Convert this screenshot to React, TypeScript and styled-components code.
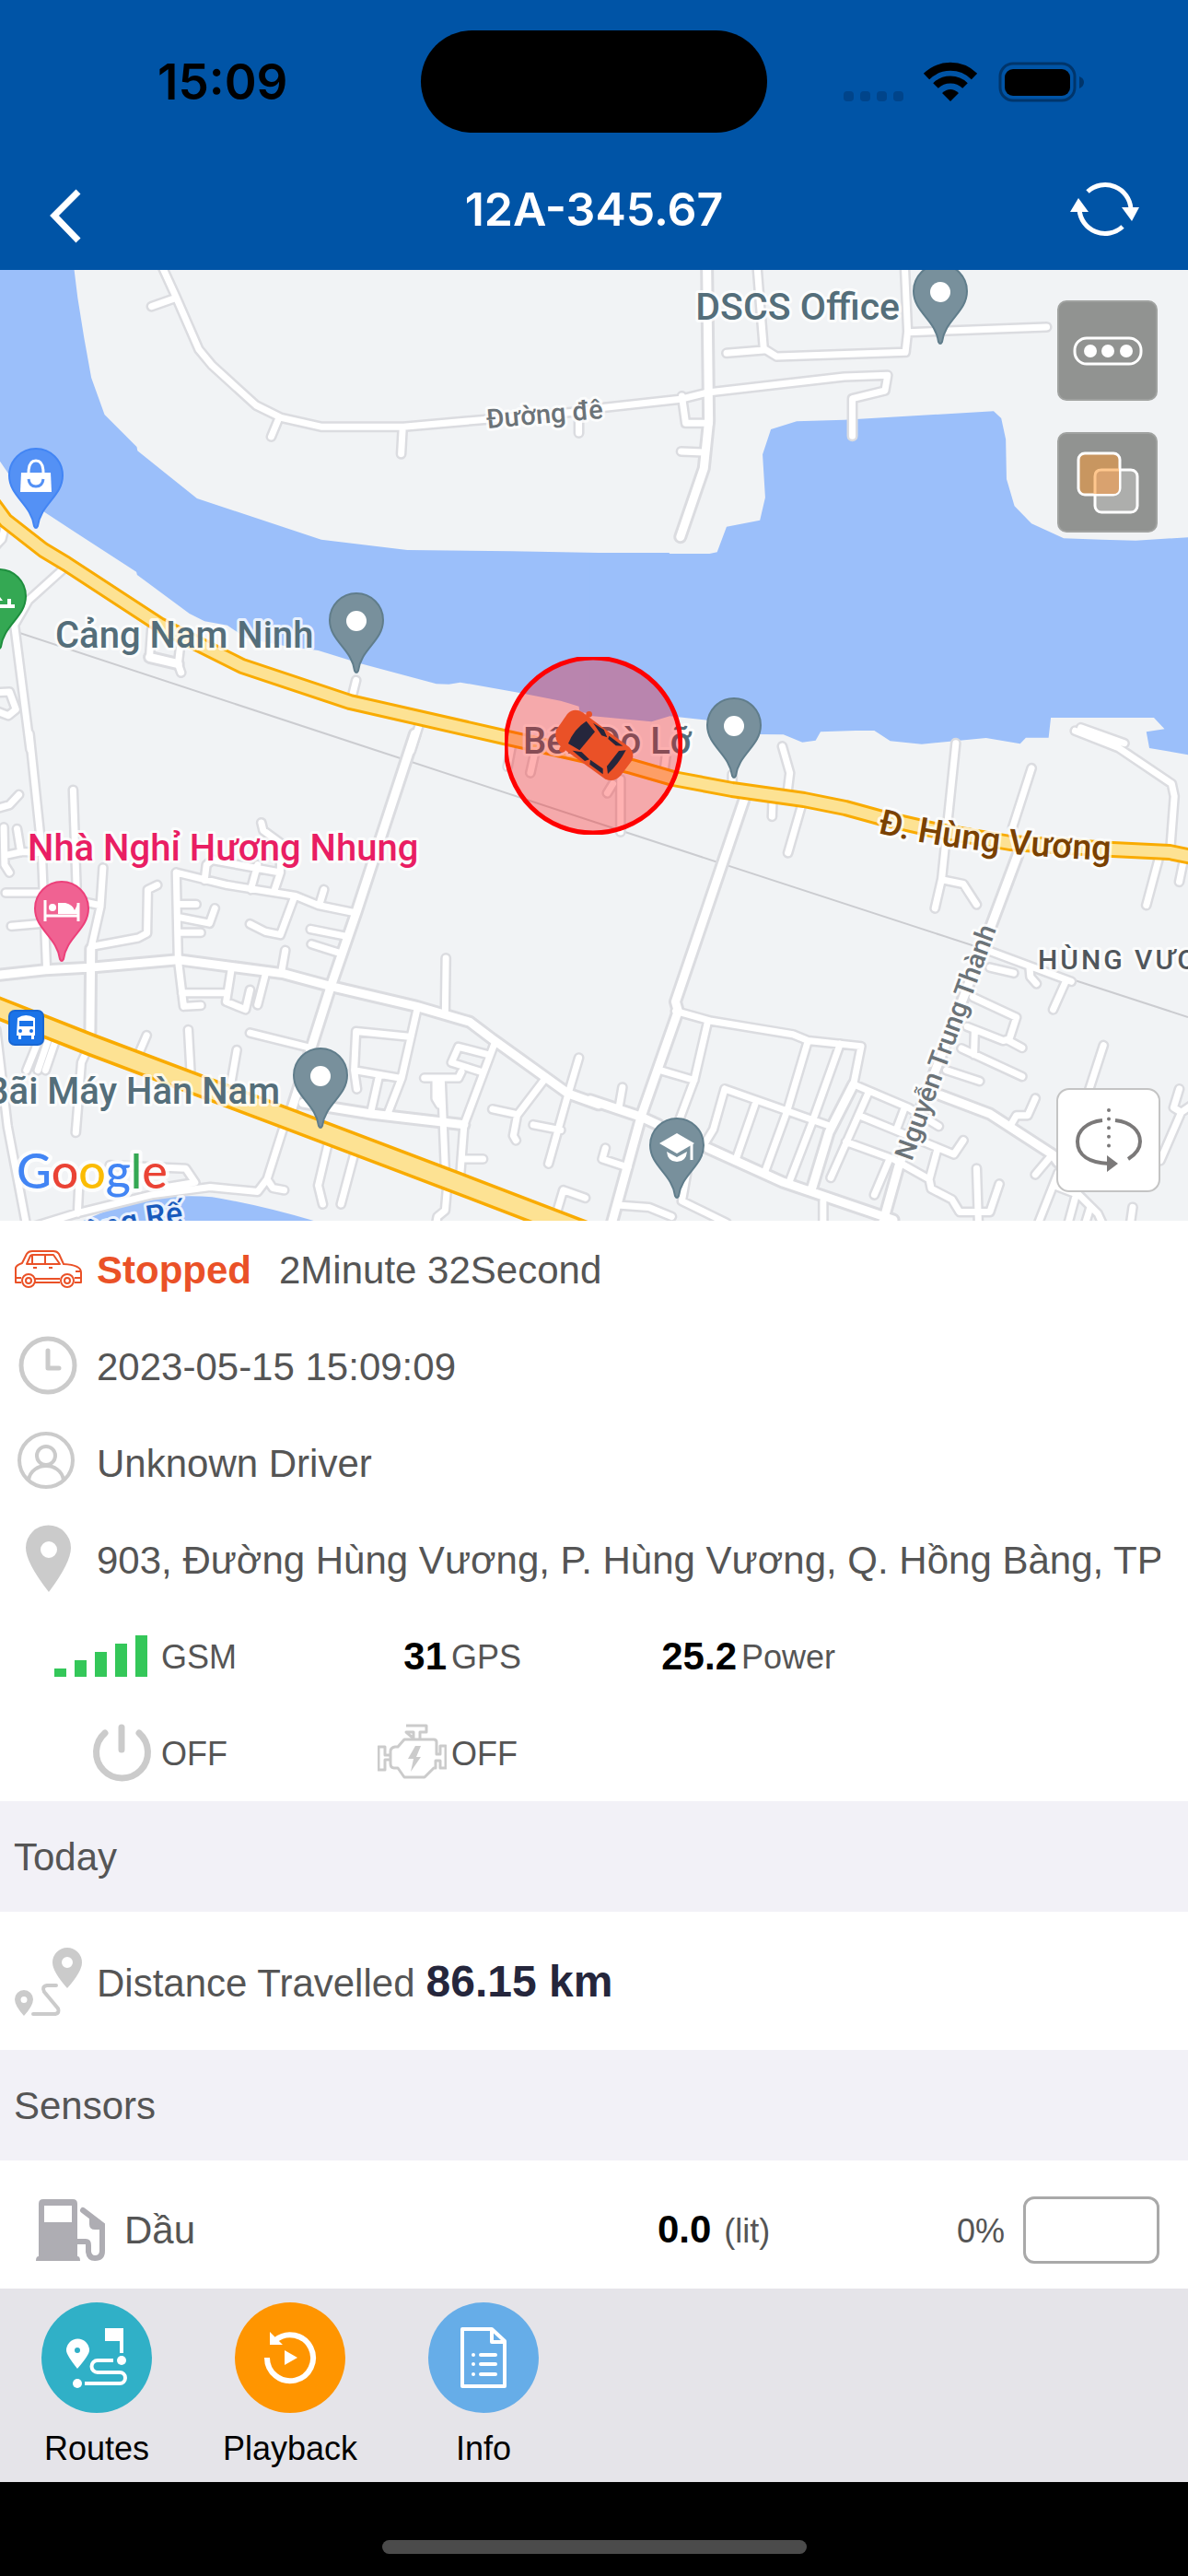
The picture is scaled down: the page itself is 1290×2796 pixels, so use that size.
import React from "react";
import styled, { createGlobalStyle } from "styled-components";

const sans = '"Liberation Sans", Arial, Helvetica, sans-serif';
const system = 'Inter, "Noto Sans", sans-serif';

const GlobalStyle = createGlobalStyle`
  *, *::before, *::after { box-sizing: border-box; }
  body { margin: 0; background: #000; font-family: ${sans}; }
  button { appearance: none; border: 0; padding: 0; margin: 0; background: none; font: inherit; color: inherit; cursor: pointer; }
  svg { display: block; flex: none; }
`;

const Screen = styled.div`
  display: flex;
  flex-direction: column;
  min-height: 100vh;
`;

const Header = styled.header`
  background: #0054a6;
`;

const StatusBar = styled.div`
  display: grid;
  grid-template-columns: 1fr 376px 1fr;
  align-items: center;
  height: 177px;
`;

const Clock = styled.time`
  padding: 0 0 0 171px;
  font: 600 53px/60px ${system};
  color: #000;
`;

const Island = styled.div`
  height: 111px;
  border-radius: 56px;
  background: #000;
`;

const StatusIcons = styled.div`
  display: flex;
  justify-content: flex-end;
  padding-right: 112px;
`;

const NavBar = styled.div`
  display: grid;
  grid-template-columns: 120px 1fr 120px;
  align-items: start;
  height: 116px;
`;

const Title = styled.h1`
  margin: 0;
  padding-top: 20px;
  text-align: center;
  font: 600 50px/60px ${system};
  color: #fff;
`;

const NavButton = styled.button`
  display: flex;
  justify-content: center;
  height: 116px;
`;

const MapArea = styled.section`
  position: relative;
  width: 100%;
  aspect-ratio: 5 / 4;
  overflow: hidden;
  background: #f1f3f5;
`;

const MapSvg = styled.svg`
  width: 100%;
  height: 100%;
`;

const MapTools = styled.div`
  position: absolute;
  top: 33px;
  right: 33px;
  display: flex;
  flex-direction: column;
  gap: 34px;
`;

const MapTool = styled.button`
  display: flex;
  align-items: center;
  justify-content: center;
  width: 109px;
  height: 109px;
  border: 2px solid #a0a2a0;
  border-radius: 10px;
  background: #919391;
`;

const RotateTool = styled.button`
  position: absolute;
  right: 30px;
  bottom: 31px;
  display: flex;
  align-items: center;
  justify-content: center;
  width: 113px;
  height: 113px;
  border: 2px solid #c4c4c4;
  border-radius: 14px;
  background: #fff;
`;

const Details = styled.main`
  background: #fff;
  color: #555;
`;

const InfoRow = styled.div`
  display: grid;
  grid-template-columns: 75px minmax(0, 1fr);
  column-gap: 15px;
  align-items: center;
  height: 105px;
  padding: 0 30px 0 15px;
  font-size: 42px;
  line-height: 48px;
`;

const RowText = styled.div`
  display: flex;
  gap: 30px;
  padding-top: 2px;
  overflow: hidden;
  white-space: nowrap;
`;

const State = styled.strong`
  color: #ea5127;
`;

const Metrics = styled.div`
  display: grid;
  grid-template-columns: repeat(4, 1fr);
  grid-auto-rows: 105px;
  padding: 0 15px;
`;

const Metric = styled.div`
  display: grid;
  grid-template-columns: 1fr 1fr;
  column-gap: 5px;
  align-items: center;
`;

const MetricValue = styled.div`
  display: flex;
  justify-content: flex-end;
  font-size: 42px;
  font-weight: 700;
  line-height: 48px;
  color: #000;
`;

const Unit = styled.span`
  padding-top: 2px;
  font-size: 36px;
  line-height: 48px;
`;

const SectionTitle = styled.h2`
  margin: 0;
  padding: 37px 15px 35px;
  background: #f2f1f7;
  font-size: 42px;
  font-weight: 400;
  line-height: 48px;
`;

const DistanceRow = styled(InfoRow)`
  height: 150px;
`;

const DistanceText = styled(RowText)`
  align-items: baseline;
  gap: 12px;
`;

const Distance = styled.strong`
  font-size: 48px;
  line-height: 60px;
  color: #25263c;
`;

const SensorRow = styled.div`
  display: flex;
  align-items: center;
  height: 139px;
  padding: 12px 31px 0 39px;
  font-size: 42px;
  line-height: 48px;
`;

const SensorName = styled.span`
  flex: 1;
  padding-left: 21px;
`;

const SensorReading = styled.div`
  display: flex;
  gap: 14px;
  width: 325px;

  strong { color: #000; }
`;

const Gauge = styled.div`
  width: 148px;
  height: 73px;
  margin-left: 20px;
  border: 3px solid #a9a9a9;
  border-radius: 12px;
`;

const Toolbar = styled.nav`
  display: flex;
  height: 210px;
  background: #e5e4e9;
`;

const ToolbarButton = styled.button`
  display: flex;
  flex-direction: column;
  align-items: center;
  gap: 18px;
  width: 210px;
  padding-top: 15px;
  font-size: 36px;
  line-height: 42px;
  color: #000;
`;

const Badge = styled.span<{ $color: string }>`
  display: block;
  width: 120px;
  height: 120px;
  border-radius: 50%;
  background: ${(p) => p.$color};
`;

const HomeArea = styled.footer`
  display: flex;
  flex: 1;
  align-items: flex-end;
  justify-content: center;
  min-height: 102px;
  padding-bottom: 24px;
  background: #000;
`;

const HomeIndicator = styled.div`
  width: 461px;
  height: 15px;
  border-radius: 8px;
  background: #4b4b4b;
`;

/* ---------- map data: four tiles, each with its own grid ---------- */

type Tile = { id: string; transform: string; water: string[]; small: string; wide: string };

const tiles: Tile[] = [
  {
    id: "nw",
    transform: "translate(0 290) scale(0.411352 0.333333)",
    water: [
      "M193,-20 L205,100 222,230 241,360 276,480 361,585 363,598 520,753 848,887 1075,921 1350,925 1580,930 V1462 L1530,1447 1528,1430 1480,1412 1375,1387 1215,1352 1185,1358 1152,1357 950,1290 840,1248 760,1235 650,1208 600,1166 540,1153 500,1128 362,1002 360,992 195,860 118,798 22,672 0,632 -10,610 V-20 Z",
    ],
    small:
      "M425,-10 L464,95 525,268 560,320 676,450 742,490 850,520 1065,520 1300,494 1580,465 M464,100 L400,128 M735,495 L716,552 M1063,520 L1059,608 M1528,500 V540 M12,850 L5,885 -10,905 M165,985 L75,1085 38,1165 M400,1180 L395,1270 470,1292 478,1320 M470,1292 L475,1240 M-10,1385 L25,1383 42,1440 22,1460 -10,1445 M38,1165 L80,1570 M940,1345 L930,1395 M1108,1485 L1085,1575",
    wide: "M395,1270 L470,1292",
  },
  {
    id: "ne",
    transform: "translate(645 290) scale(0.411352 0.333333)",
    water: [
      "M-10,930 L198,930 200,933 305,933 325,928 350,845 438,824 452,750 445,610 467,528 535,502 660,497 1055,469 1075,492 1087,560 1089,690 1095,715 1110,778 1155,835 1240,883 1340,887 1430,890 1580,879 V1590 L1466,1566 1458,1513 1506,1504 1478,1467 1206,1467 1200,1532 1140,1532 1125,1552 1035,1533 865,1553 782,1543 740,1509 690,1509 598,1513 585,1541 550,1547 500,1522 430,1521 300,1475 200,1462 152,1480 -10,1461 Z",
    ],
    small:
      "M430,-10 L448,265 482,291 822,277 828,210 820,-10 M350,280 L448,270 M828,212 L1195,195 M-10,462 L40,455 228,430 300,408 660,357 775,352 768,402 682,428 682,550 M232,420 L242,508 305,508 M230,600 L295,603",
    wide: "M298,-10 L303,500 290,655 228,878",
  },
  {
    id: "sw",
    transform: "translate(0 800) scale(0.411352 0.338010)",
    water: ["M190,1570 Q310,1500 400,1481 Q490,1470 560,1477 Q700,1505 860,1565 Z"],
    small:
      "M78,-10 L110,360 123,745 M-10,230 L25,218 50,185 M193,170 L202,480 M10,290 L12,410 25,435 M45,295 L55,370 M15,380 L60,368 110,372 M15,500 H110 M30,607 L100,600 M225,530 L262,540 M415,475 L390,490 388,630 365,645 245,672 M272,420 L265,545 240,680 M228,1010 L215,1045 200,1270 M465,435 L470,715 485,865 530,862 M465,435 L600,475 780,510 840,540 940,565 M468,537 H518 M470,578 L553,598 567,550 M470,628 H530 M540,460 L545,410 560,395 740,435 725,490 M680,410 L662,490 M740,340 L695,300 690,275 M740,435 V395 M855,490 L845,530 M775,520 L740,635 700,625 660,600 M820,617 L915,640 M822,665 L900,695 M753,685 L743,755 M610,750 L597,850 648,875 660,812 M480,822 H597 M700,765 L680,860 M387,958 L368,1012 M497,940 L503,1070 M625,1005 L610,1110 M660,950 L810,995 M1177,710 L1175,885 M1100,880 L1060,1095 1025,1205 M1080,962 L940,945 935,1070 1055,1095 M935,1070 L942,1130 M1000,1090 L980,1200 M1305,985 L1225,1245 1215,1405 M1290,1020 L1210,995 1192,1045 1270,1075 M1218,1075 L1210,1095 1120,1095 M1150,1100 V1160 L1160,1180 M1165,1095 L1175,1390 M1180,1450 L1175,1520 1155,1540 1150,1570 M1218,1355 H1275 M1440,1095 L1365,1215 1355,1280 1362,1295 M1300,1195 L1365,1212 M1528,1030 L1500,1145 1448,1370 M1408,1245 L1480,1262 M1470,1525 L1487,1455 1545,1480 M865,1310 L840,1440 852,1500 M935,1340 L900,1500 M-10,940 L20,1250 70,1570 M100,980 L70,1070 M125,980 L100,1070 M148,970 L120,1070 M205,1530 L210,1400 M290,1375 L490,1385 515,1430 440,1445 M748,1255 L705,1420 680,1460 555,1445 400,1470 200,1530 80,1575 M705,1420 L720,1448 750,1455 M1350,30 L1340,95 M1410,60 L1400,115",
    wide: "M-10,765 L120,748 240,740 470,715 750,760 872,800 1100,865 1240,915 1300,970 1500,1145 1580,1180 M800,1175 L980,1210 1225,1245 M1095,-10 L940,565 872,805 770,1195 M240,680 L238,950",
  },
  {
    id: "se",
    transform: "translate(645 800) scale(0.411352 0.338010)",
    water: [],
    small:
      "M497,30 L517,115 511,175 M365,120 V160 M955,20 L918,455 900,550 M920,458 L975,472 1010,538 M1155,100 L1105,290 M215,880 L310,912 525,955 565,975 705,993 685,1115 M300,915 L265,1100 225,1230 M175,1070 L265,1102 M565,975 L510,1200 450,1400 M650,985 L575,1240 515,1430 M345,1130 L625,1250 M345,1130 L315,1260 290,1310 M425,1180 L375,1355 M65,1195 L75,1125 M605,1490 V1570 M685,1115 L830,1190 910,1250 M725,1140 L625,1415 M700,1215 L950,1340 975,1295 M820,1190 L800,1255 M665,1300 L790,1355 885,1420 890,1450 945,1485 965,1525 1045,1525 1070,1435 M905,1330 L885,1420 M1010,1385 L1015,1570 M780,1355 L740,1470 M1000,835 L1115,900 1095,975 1130,998 M985,930 L1080,975 1095,970 M1005,940 L1003,1020 M970,1000 L1130,1090 M930,1070 L1018,1105 M1045,740 L1108,758 M1050,690 L1260,785 M1150,745 L1152,770 1168,792 M1245,785 L1212,875 M1345,990 L1305,1140 M1165,1160 L1145,1215 1115,1215 1098,1250 M1210,1340 L1165,1405 M1545,1130 L1530,1190 1550,1205 1580,1180 M1550,1205 L1495,1360 M1225,1400 L1170,1570 M1215,1440 L1280,1470 1330,1530 1345,1570 M1270,1480 L1250,1570 M1310,1510 L1295,1570 M1422,1510 L1415,1570 M30,1320 L22,1355 90,1382 M62,1503 L145,1510 205,1540 M245,1400 L232,1490 350,1560 M472,190 L470,255 M548,220 L512,372 M1492,385 L1458,540 M1555,405 L1545,465 M190,60 L185,110 M50,150 L35,180 M70,135 V305 M1270,-20 L1385,35 1525,150 1532,190 1522,350 M1285,-30 L1400,20",
    wide: "M398,195 L215,850 222,880 125,1215 45,1570 M-10,1165 L125,1220 170,1245 M300,1320 L500,1430 790,1550 M685,1115 L620,1270 575,1450 M1118,380 L1050,600 805,1375 760,1570 M915,1150 L1045,1210 1210,1340 1225,1365",
  },
];

const highwayOne =
  "M-8,546 L6,565 47,597 72,612 173,678 263,723 380,762 547,800 645,822 686,832 731,845 795,857 873,868 918,877 958,888 1015,901 1097,915 1208,922 1270,925 1299,931";
const highwayTwo = "M-10,1091 L99,1134 317,1216 494,1283 700,1362";

function Roads() {
  const pass = (field: "small" | "wide", color: string, width: number) =>
    tiles.map((t) => (
      <g key={t.id + field} transform={t.transform}>
        <path d={t[field]} stroke={color} strokeWidth={width} vectorEffect="non-scaling-stroke" />
      </g>
    ));
  return (
    <g fill="none" strokeLinecap="round" strokeLinejoin="round">
      {pass("small", "#dbdce0", 12)}
      {pass("wide", "#dbdce0", 15)}
      {pass("small", "#ffffff", 7)}
      {pass("wide", "#ffffff", 9)}
      <path d={highwayOne} stroke="#f9ab00" strokeWidth={18} />
      <path d={highwayTwo} stroke="#f9ab00" strokeWidth={25} />
      <path d={highwayOne} stroke="#fde293" strokeWidth={12} />
      <path d={highwayTwo} stroke="#fde293" strokeWidth={18} />
    </g>
  );
}

type PinProps = { x: number; y: number; fill: string; stroke: string; children?: React.ReactNode };

/* A place marker whose tip stands on (x, y); its head is centred 57 units above. */
function Pin({ x, y, fill, stroke, children }: PinProps) {
  return (
    <g transform={`translate(${x} ${y})`}>
      <path
        d="M-2,-2 C-5,-26 -29,-34 -29,-57 A29,29 0 0 1 29,-57 C29,-34 5,-26 2,-2 Q0,2 -2,-2 Z"
        fill={fill}
        stroke={stroke}
        strokeWidth={2}
      />
      {children ?? <circle cy={-56} r={11} fill="#fff" />}
    </g>
  );
}

const slate = { fill: "#78909c", stroke: "#607d8b" };

const Label = styled.text<{ $size: number; $color: string }>`
  font-family: Roboto, "Noto Sans", sans-serif;
  font-size: ${(p) => p.$size}px;
  font-weight: 500;
  fill: ${(p) => p.$color};
  stroke: rgba(255, 255, 255, 0.8);
  stroke-width: 6px;
  stroke-linejoin: round;
  paint-order: stroke;
`;

const AreaLabel = styled(Label)`
  letter-spacing: 3px;
`;

const Logo = styled.text`
  font: 500 52px Lato, sans-serif;
  stroke: rgba(255, 255, 255, 0.8);
  stroke-width: 8px;
  stroke-linejoin: round;
  paint-order: stroke;
`;

function VehicleMarker() {
  return (
    <g>
      <svg x={548} y={713} width={193} height={193} viewBox="548 713 193 193">
        <circle cx={644} cy={809} r={95} fill="rgba(255,0,0,0.3)" stroke="#f00" strokeWidth={5} />
      </svg>
      <g transform="translate(540 705) scale(0.333333)">
        <g fill="#ea5127">
          <circle cx={299} cy={211} r={10} />
          <circle cx={212} cy={325} r={10} />
          <path d="M228,210 Q250,188 278,205 L430,318 Q450,338 438,362 L402,410 Q380,434 352,422 L208,318 Q182,292 192,262 Z" />
        </g>
        <g fill="#25263c">
          <path d="M290,233 L318,268 268,328 231,306 Q250,258 290,233 Z" />
          <path d="M312,239 L347,261 358,286 340,280 Z" />
          <path d="M364,281 L409,314 386,313 361,291 Z" />
          <path d="M245,329 L275,334 300,358 285,363 Z" />
          <path d="M303,359 L344,388 344,406 301,374 Z" />
          <path d="M419,328 L396,330 357,380 360,405 Q396,372 419,328 Z" />
        </g>
      </g>
    </g>
  );
}

function MapView() {
  return (
    <MapSvg viewBox="0 293 1290 1032" preserveAspectRatio="xMidYMid slice" role="img" aria-label="Map">
      {tiles.map((t) => (
        <g key={t.id} transform={t.transform} fill="#9bbffa">
          {t.water.map((d) => (
            <path key={d} d={d} />
          ))}
        </g>
      ))}
      <path d="M0,680 L395,810 645,892 1077,1033 1167,1064 1290,1104" fill="none" stroke="#cbccd0" strokeWidth={2} />
      <Roads />

      <Label x={60} y={703} $size={40} $color="#546e7a">Cảng Nam Ninh</Label>
      <Label x={977} y={347} $size={41} $color="#546e7a" textAnchor="end">DSCS Office</Label>
      <Label x={568} y={818} $size={40} $color="#546e7a">Bến Đò Lỡ</Label>
      <Label x={30} y={934} $size={40} $color="#e91e63">Nhà Nghỉ Hương Nhung</Label>
      <Label x={304} y={1198} $size={40} $color="#546e7a" textAnchor="end">Bãi Máy Hàn Nam</Label>
      <Label transform="translate(529 465) rotate(-5)" $size={29} $color="#6b7378">Đường đê</Label>
      <Label transform="translate(990 1261) rotate(-70)" $size={29} $color="#6b7378">Nguyễn Trung Thành</Label>
      <AreaLabel x={1127} y={1052} $size={30} $color="#50565b">HÙNG VƯƠNG</AreaLabel>
      <path id="hung-vuong" d="M953,904 Q1060,931 1270,936" fill="none" />
      <Label $size={38} $color="#7a4100">
        <textPath href="#hung-vuong">Đ. Hùng Vương</textPath>
      </Label>
      <path id="song-re" d="M78,1359 Q132,1332 220,1326" fill="none" />
      <Label $size={34} $color="#185abc">
        <textPath href="#song-re">Sông Rế</textPath>
      </Label>

      <Pin x={39} y={573} fill="#5491f5" stroke="#4285f4">
        <path d="M-16,-60 H16 L17,-39 H-17 Z" fill="#fff" />
        <path d="M-8,-60 Q-8,-73 0,-73 Q8,-73 8,-60" fill="none" stroke="#fff" strokeWidth={3} />
        <path d="M-8,-53 Q-7,-45 0,-45 Q7,-45 8,-53" fill="none" stroke="#5491f5" strokeWidth={3} />
      </Pin>
      <Pin x={-1} y={704} fill="#34a853" stroke="#1e8e3e">
        <path d="M-10,-46 H17 M11,-54 V-46" fill="none" stroke="#fff" strokeWidth={4} />
        <path d="M-8,-68 L4,-52 H-8 Z" fill="#fff" />
      </Pin>
      <Pin x={387} y={730} {...slate} />
      <Pin x={1021} y={373} {...slate} />
      <Pin x={797} y={844} {...slate} />
      <Pin x={348} y={1224} {...slate} />
      <Pin x={67} y={1043} fill="#f06292" stroke="#ec407a">
        <path d="M-18,-66 V-43 M-18,-49 H18 M18,-63 V-43" fill="none" stroke="#fff" strokeWidth={3} />
        <circle cx={-10} cy={-58} r={4} fill="#fff" />
        <path d="M-4,-63 H4 Q12,-61 14,-55 L18,-63 V-51 H-4 Z" fill="#fff" />
      </Pin>
      <Pin x={735} y={1300} {...slate}>
        <path d="M0,-70 L19,-59 0,-48 -19,-59 Z" fill="#fff" />
        <path d="M-11,-50 L0,-44 11,-50 Q10,-39 0,-39 Q-10,-39 -11,-50 Z" fill="#fff" />
        <path d="M16,-59 V-41" stroke="#fff" strokeWidth={3} />
      </Pin>

      <rect x={10} y={1097} width={37} height={37} rx={6} fill="#1a73e8" stroke="#1967d2" strokeWidth={2} />
      <path d="M19,1105 Q28,1099 38,1105 V1124 H37 V1128 H34 V1124 H23 V1128 H20 V1124 H18 Z" fill="#fff" />
      <rect x={21} y={1108} width={15} height={6} fill="#1a73e8" />
      <circle cx={22} cy={1119} r={2} fill="#1a73e8" />
      <circle cx={34} cy={1119} r={2} fill="#1a73e8" />

      <Logo x={18} y={1290}>
        <tspan fill="#4285f4">G</tspan>
        <tspan fill="#ea4335">o</tspan>
        <tspan fill="#fbbc04">o</tspan>
        <tspan fill="#4285f4">g</tspan>
        <tspan fill="#34a853">l</tspan>
        <tspan fill="#ea4335">e</tspan>
      </Logo>

      <VehicleMarker />
    </MapSvg>
  );
}

/* ---------- icons ---------- */

const grey = "#cbcbcb";

const PhoneStatus = () => (
  <svg width={262} height={44} viewBox="916 64 262 44" aria-hidden="true">
    <g fill="#00448a">
      {[916, 934, 952, 970].map((x) => (
        <rect key={x} x={x} y={96} width={11} height={11} rx={4} />
      ))}
    </g>
    <path d="M1006,83 A37,37 0 0 1 1058,83" transform="translate(0 -3)" fill="none" stroke="#000" strokeWidth={9} />
    <path d="M1016,90 A23,23 0 0 1 1048,90" fill="none" stroke="#000" strokeWidth={8} />
    <path d="M1032,107 L1023,98 Q1032,90 1041,98 Z" fill="#000" />
    <rect x={1086} y={66} width={81} height={40} rx={14} fill="none" stroke="#00356b" strokeWidth={3} />
    <rect x={1091} y={72} width={71} height={29} rx={9} fill="#000" />
    <path d="M1172,80 Q1177,82 1177,86 Q1177,91 1172,93 Z" fill="#00356b" />
  </svg>
);

const BackIcon = () => (
  <svg width={120} height={116} viewBox="0 177 120 116" aria-hidden="true">
    <path d="M85,208 L59,234 85,261" fill="none" stroke="#fff" strokeWidth={7} />
  </svg>
);

const RefreshIcon = () => (
  <svg width={120} height={116} viewBox="1170 177 120 116" aria-hidden="true" overflow="visible">
    <g fill="none" stroke="#fff" strokeWidth={5}>
      <path d="M1181,208 A28,28 0 0 1 1228,227" />
      <path d="M1219,246 A28,28 0 0 1 1172,227" />
    </g>
    <path d="M1218,225 H1237 L1229,240 Z M1162,230 H1182 L1171,215 Z" fill="#fff" />
  </svg>
);

const MoreIcon = () => (
  <svg width={76} height={34} viewBox="1164 362 76 34" aria-hidden="true">
    <rect x={1166} y={365} width={72} height={28} rx={13} fill="none" stroke="#fff" strokeWidth={3} />
    {[1183, 1202, 1222].map((x) => (
      <circle key={x} cx={x} cy={379} r={7} fill="#fff" />
    ))}
  </svg>
);

const LayersIcon = () => (
  <svg width={70} height={68} viewBox="1169 490 70 68" aria-hidden="true">
    <rect x={1190} y={510} width={46} height={46} rx={7} fill="#adaeac" stroke="#fff" strokeWidth={3} />
    <rect x={1172} y={492} width={45} height={45} rx={7} fill="#c89660" stroke="#fff" strokeWidth={3} />
    <path d="M1190,536 V517 Q1190,510 1197,510 H1216 V530 Q1216,536 1210,536 Z" fill="#d9a26f" />
    <path d="M1190,536 V517 Q1190,510 1197,510 H1216" fill="none" stroke="#ffc78e" strokeWidth={3} />
  </svg>
);

const RotateIcon = () => (
  <svg width={74} height={74} viewBox="1166 1200 74 74" aria-hidden="true">
    <g fill="none" stroke="#7b7979" strokeWidth={4}>
      <path d="M1196,1215 C1178,1217 1169,1227 1169,1238 C1169,1253 1182,1261 1203,1262" />
      <path d="M1210,1215 C1228,1217 1237,1227 1237,1238 Q1237,1249 1224,1257" />
      <path d="M1203,1204 V1245" strokeDasharray="0 9.6" strokeLinecap="round" />
    </g>
    <path d="M1201,1253 L1213,1262 1201,1271 Z" fill="#7b7979" />
  </svg>
);

const CarIcon = () => (
  <svg width={75} height={46} viewBox="15 1355 75 46" aria-hidden="true">
    <g fill="none" stroke="#ea5127" strokeWidth={2} strokeLinejoin="round">
      <path d="M23,1392 H17 V1376 Q18,1373 24,1371 L29,1361 Q31,1358 35,1358 H58 Q62,1358 64,1361 L69,1372 Q88,1373 88,1381 V1392 H81 M38,1392 H65 M38,1388 H65" />
      <path d="M29,1372 L33,1363 Q34,1362 36,1362 H58 L65,1372 Z M49,1362 V1372 M35,1362 V1372 M36,1376 H40 M53,1376 H57 M82,1380 H88 M17,1387 H23 M81,1387 H88" />
      <circle cx={31} cy={1390} r={7} />
      <circle cx={73} cy={1390} r={7} />
      <circle cx={31} cy={1390} r={3} />
      <circle cx={73} cy={1390} r={3} />
    </g>
  </svg>
);

const ClockIcon = () => (
  <svg width={75} height={75} viewBox="15 1445 75 75" aria-hidden="true">
    <g fill="none" stroke={grey} strokeWidth={5} strokeLinecap="round" strokeLinejoin="round">
      <circle cx={52} cy={1482} r={29} />
      <path d="M52,1466 V1485 H64" />
    </g>
  </svg>
);

const UserIcon = () => (
  <svg width={75} height={75} viewBox="15 1550 75 75" aria-hidden="true">
    <g fill="none" stroke={grey} strokeWidth={4}>
      <circle cx={50} cy={1585} r={29} />
      <circle cx={50} cy={1580} r={10} />
      <path d="M31,1606 C35,1586 65,1586 69,1606" />
    </g>
  </svg>
);

const PlaceIcon = () => (
  <svg width={75} height={75} viewBox="15 1655 75 75" aria-hidden="true">
    <path
      fillRule="evenodd"
      fill={grey}
      d="M53,1728 Q28,1696 28,1680 A24,24 0 0 1 77,1680 Q77,1696 53,1728 Z M53,1673 A9,9 0 1 0 53,1691 A9,9 0 1 0 53,1673 Z"
    />
  </svg>
);

const SignalIcon = () => (
  <svg width={112} height={45} viewBox="58 1775 112 45" role="img" aria-label="Signal strength">
    {[9, 18, 27, 36, 45].map((h, i) => (
      <rect key={h} x={59 + i * 22} y={1820 - h} width={13} height={h} fill="#34c759" />
    ))}
  </svg>
);

const PowerIcon = () => (
  <svg width={75} height={75} viewBox="95 1865 75 75" aria-hidden="true">
    <g fill="none" stroke={grey} strokeWidth={7} strokeLinecap="round">
      <path d="M114,1881 A28,28 0 1 0 151,1881" />
      <path d="M132,1875 V1899" />
    </g>
  </svg>
);

const EngineIcon = () => (
  <svg width={75} height={75} viewBox="410 1865 75 75" aria-hidden="true">
    <g fill="none" stroke={grey} strokeWidth={3} strokeLinejoin="round">
      <path d="M441,1873 H463 V1880 H456 V1887 M449,1887 V1880 H441 Z" />
      <path d="M439,1888 H471 Q474,1888 474,1891 V1904 H478 V1895 H484 V1919 H478 V1911 H473 V1919 H471 L461,1929 H439 L432,1919 H428 Q424,1919 424,1914 V1901 Q424,1897 429,1896 H432 Z" />
      <path d="M424,1905 H418 V1896 H411 V1921 H418 V1910 H424" />
    </g>
    <path d="M451,1895 L443,1909 H449 L446,1923 457,1907 H452 L457,1895 Z" fill={grey} />
  </svg>
);

const DistanceIcon = () => (
  <svg width={75} height={76} viewBox="15 2112 75 76" aria-hidden="true">
    <g fill={grey} fillRule="evenodd">
      <path d="M73,2158 Q57,2140 57,2130 A16,16 0 0 1 89,2130 Q89,2140 73,2158 Z M73,2124 A6,6 0 1 0 73,2136 A6,6 0 1 0 73,2124 Z" />
      <path d="M26,2188 Q16,2177 16,2170 A10,10 0 0 1 36,2170 Q36,2177 26,2188 Z M26,2167 A3,3 0 1 0 26,2174 A3,3 0 1 0 26,2167 Z" />
    </g>
    <path
      d="M61,2155 H51 Q45,2156 48,2162 L63,2180 Q65,2185 60,2186 H36"
      fill="none"
      stroke={grey}
      strokeWidth={4}
      strokeLinecap="round"
    />
  </svg>
);

const FuelIcon = () => (
  <svg width={75} height={67} viewBox="39 2386 75 67" aria-hidden="true">
    <path
      fill="#aeadb3"
      fillRule="evenodd"
      d="M42,2448 V2391 Q42,2386 47,2386 H79 Q84,2386 84,2391 V2448 Q87,2448 87,2453 H39 Q39,2448 42,2448 Z M48,2393 V2411 H78 V2393 Z"
    />
    <path d="M97,2402 L109,2409 111,2419 H103 Q97,2419 97,2413 Z" fill="#aeadb3" />
    <path
      d="M84,2432 H93 Q96,2432 96,2436 V2443 Q97,2450 103,2450 Q111,2450 111,2442 V2414 L90,2398"
      fill="none"
      stroke="#aeadb3"
      strokeWidth={6}
      strokeLinecap="round"
    />
  </svg>
);

const RoutesIcon = () => (
  <svg width={120} height={120} viewBox="45 2499 120 120" aria-hidden="true">
    <g fill="#fff">
      <path d="M114,2527 H134 V2554 H130 V2541 H114 Z" />
      <circle cx={132} cy={2562} r={5} />
      <circle cx={84} cy={2587} r={5} />
      <path fillRule="evenodd" d="M84,2571 Q72,2556 72,2551 A12,12 0 0 1 97,2551 Q97,2556 84,2571 Z M84,2548 A3,3 0 1 0 84,2554 A3,3 0 1 0 84,2548 Z" />
    </g>
    <path
      d="M123,2562 H106 A6,6 0 0 0 106,2575 H130 A6,6 0 0 1 130,2587 H92"
      fill="none"
      stroke="#fff"
      strokeWidth={4}
    />
  </svg>
);

const PlaybackIcon = () => (
  <svg width={120} height={120} viewBox="255 2499 120 120" aria-hidden="true">
    <path d="M290,2559 A25,25 0 1 0 299,2540" fill="none" stroke="#fff" strokeWidth={6} />
    <path d="M293,2531 V2545 H307 Z M309,2551 V2567 L323,2559 Z" fill="#fff" />
  </svg>
);

const InfoIcon = () => (
  <svg width={120} height={120} viewBox="465 2499 120 120" aria-hidden="true">
    <g fill="none" stroke="#fff" strokeWidth={4} strokeLinejoin="round">
      <path d="M502,2528 H534 L548,2541 V2590 H502 Z" />
      <path d="M534,2528 V2542 H548" />
      <path d="M522,2556 H538 M522,2566 H538 M522,2577 H538 M514,2556 H514 M514,2566 H514 M514,2577 H514" strokeLinecap="round" />
    </g>
  </svg>
);

const actions = [
  { label: "Routes", color: "#30b0c7", Icon: RoutesIcon },
  { label: "Playback", color: "#ff9500", Icon: PlaybackIcon },
  { label: "Info", color: "#66ade8", Icon: InfoIcon },
];

export default function App() {
  return (
    <Screen>
      <GlobalStyle />
      <Header>
        <StatusBar>
          <Clock>15:09</Clock>
          <Island />
          <StatusIcons>
            <PhoneStatus />
          </StatusIcons>
        </StatusBar>
        <NavBar>
          <NavButton aria-label="Back">
            <BackIcon />
          </NavButton>
          <Title>12A-345.67</Title>
          <NavButton aria-label="Refresh">
            <RefreshIcon />
          </NavButton>
        </NavBar>
      </Header>

      <MapArea>
        <MapView />
        <MapTools>
          <MapTool aria-label="More options">
            <MoreIcon />
          </MapTool>
          <MapTool aria-label="Map layers">
            <LayersIcon />
          </MapTool>
        </MapTools>
        <RotateTool aria-label="Rotate map">
          <RotateIcon />
        </RotateTool>
      </MapArea>

      <Details>
        <InfoRow>
          <CarIcon />
          <RowText>
            <State>Stopped</State>
            <span>2Minute 32Second</span>
          </RowText>
        </InfoRow>
        <InfoRow>
          <ClockIcon />
          <RowText>2023-05-15 15:09:09</RowText>
        </InfoRow>
        <InfoRow>
          <UserIcon />
          <RowText>Unknown Driver</RowText>
        </InfoRow>
        <InfoRow>
          <PlaceIcon />
          <RowText>903, Đường Hùng Vương, P. Hùng Vương, Q. Hồng Bàng, TP.</RowText>
        </InfoRow>

        <Metrics>
          <Metric>
            <MetricValue>
              <SignalIcon />
            </MetricValue>
            <Unit>GSM</Unit>
          </Metric>
          <Metric>
            <MetricValue>31</MetricValue>
            <Unit>GPS</Unit>
          </Metric>
          <Metric>
            <MetricValue>25.2</MetricValue>
            <Unit>Power</Unit>
          </Metric>
          <Metric />
          <Metric>
            <MetricValue>
              <PowerIcon />
            </MetricValue>
            <Unit>OFF</Unit>
          </Metric>
          <Metric>
            <MetricValue>
              <EngineIcon />
            </MetricValue>
            <Unit>OFF</Unit>
          </Metric>
        </Metrics>

        <SectionTitle>Today</SectionTitle>
        <DistanceRow>
          <DistanceIcon />
          <DistanceText>
            <span>Distance Travelled</span>
            <Distance>86.15 km</Distance>
          </DistanceText>
        </DistanceRow>

        <SectionTitle>Sensors</SectionTitle>
        <SensorRow>
          <FuelIcon />
          <SensorName>Dầu</SensorName>
          <SensorReading>
            <strong>0.0</strong>
            <Unit>(lit)</Unit>
          </SensorReading>
          <Unit>0%</Unit>
          <Gauge role="meter" aria-label="Fuel level" aria-valuemin={0} aria-valuemax={100} aria-valuenow={0} />
        </SensorRow>
      </Details>

      <Toolbar>
        {actions.map(({ label, color, Icon }) => (
          <ToolbarButton key={label}>
            <Badge $color={color}>
              <Icon />
            </Badge>
            {label}
          </ToolbarButton>
        ))}
      </Toolbar>
      <HomeArea>
        <HomeIndicator />
      </HomeArea>
    </Screen>
  );
}
